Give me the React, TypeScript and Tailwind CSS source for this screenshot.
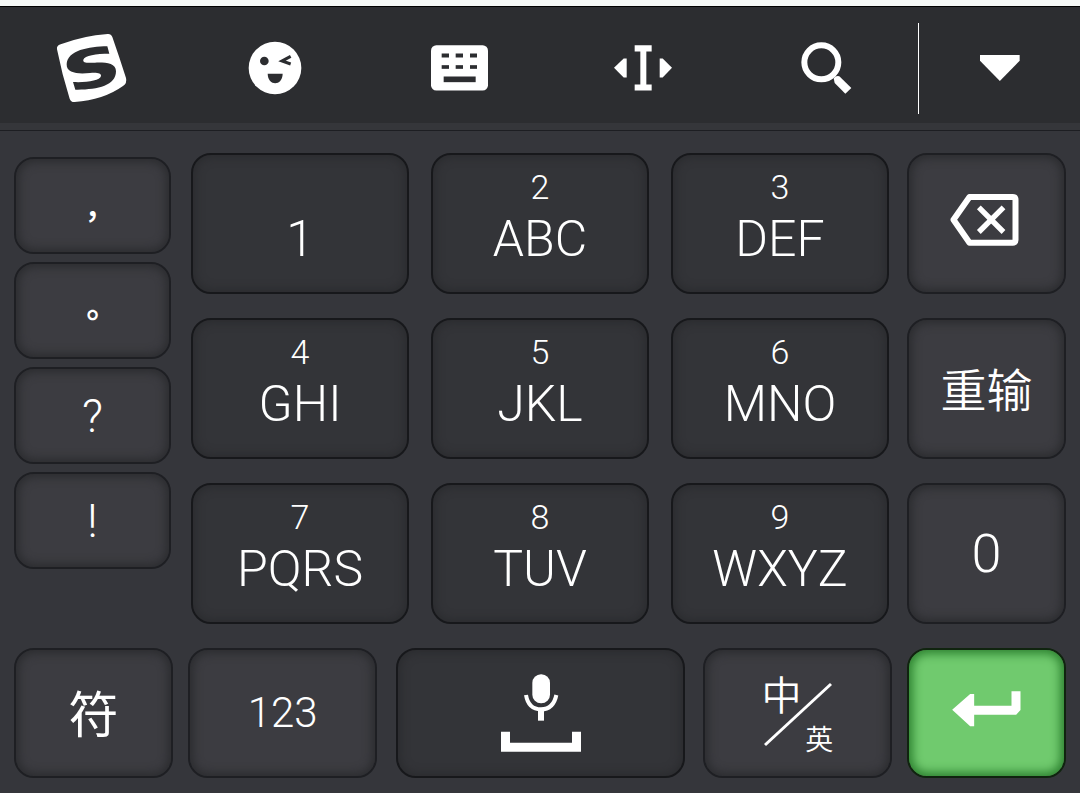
import type { ReactNode } from "react";

const INK = "#2c2d30";

function LogoIcon() {
  return (
    <svg viewBox="48 100 216 210" className="h-[70px] w-[72px]" aria-hidden="true">
      <path
        fill="#fff"
        d="M62 134 Q130 108 203 103 Q213 102 217 112 Q238 172 258 235 Q262 250 249 259 Q190 301 104 307 Q93 308 89 297 Q66 225 51 149 Q49 138 62 134Z"
      />
      <path
        fill={INK}
        d="M202 140 C146 141 82 152 80 194 C79 222 116 223 150 220 C172 218 184 221 183 229 C180 243 140 249 99 247 L106 270 C170 271 228 259 228 215 C228 190 196 188 165 189 C140 190 128 190 130 180 C134 167 168 162 208 162Z"
      />
    </svg>
  );
}

function SmileyIcon() {
  return (
    <svg viewBox="622 124 162 162" className="h-[54px] w-[54px]" aria-hidden="true">
      <circle cx="703" cy="205" r="79" fill="#fff" />
      <circle cx="671" cy="184" r="13" fill={INK} />
      <path d="M750 170 L724 184 L750 193" fill="none" stroke={INK} strokeWidth="9" />
      <path d="M681 222 H726 C725 260 682 260 681 222Z" fill={INK} />
    </svg>
  );
}

function KeyboardIcon() {
  return (
    <svg viewBox="60 77 171 137" className="h-[46px] w-[57px]" aria-hidden="true">
      <rect x="60" y="77" width="171" height="136" rx="16" fill="#fff" />
      <g fill={INK}>
        <rect x="92" y="102" width="22" height="12" />
        <rect x="134" y="102" width="22" height="12" />
        <rect x="177" y="102" width="21" height="12" />
        <rect x="92" y="137" width="22" height="11" />
        <rect x="134" y="137" width="22" height="11" />
        <rect x="177" y="137" width="21" height="11" />
        <rect x="98" y="171" width="96" height="17" />
      </g>
    </svg>
  );
}

function CursorIcon() {
  return (
    <svg viewBox="610 77 174 137" className="h-[46px] w-[58px]" aria-hidden="true">
      <g fill="#fff">
        <path d="M672 77 H723 V96 H707 V195 H723 V213 H672 V195 H689 V96 H672Z" />
        <path d="M610 145 L639 117 H648 V174 H639Z" />
        <path d="M784 145 L756 117 H747 V174 H756Z" />
      </g>
    </svg>
  );
}

function SearchIcon() {
  return (
    <svg viewBox="65 127 153 156" className="h-[52px] w-[51px]" aria-hidden="true">
      <circle cx="126" cy="188" r="51" fill="none" stroke="#fff" strokeWidth="18" />
      <path d="M163 236 Q170 227 180 230 L216 265 L198 282 L166 250Z" fill="#fff" />
    </svg>
  );
}

function CollapseIcon() {
  return (
    <svg viewBox="602 171 119 77" className="h-[26px] w-[40px]" aria-hidden="true">
      <path d="M602 171 H720 V188 L661 248 L602 188Z" fill="#fff" />
    </svg>
  );
}

function BackspaceIcon() {
  return (
    <svg viewBox="210 164 206 156" className="h-[52px] w-[69px]" aria-hidden="true">
      <path
        d="M268 173 H398 Q406 173 406 181 V302 Q406 310 398 310 H268 L220 241Z"
        fill="none"
        stroke="#fff"
        strokeWidth="18"
        strokeLinejoin="round"
      />
      <path d="M296 204 L370 278 M370 204 L296 278" stroke="#fff" strokeWidth="16" />
    </svg>
  );
}

function EnterIcon() {
  return (
    <svg viewBox="216 184 206 108" className="h-[36px] w-[69px]" aria-hidden="true">
      <path
        d="M216 240 L270 193 H282 V228 H394 V185 H421 V241 L408 255 H282 V290 H270Z"
        fill="#fff"
      />
    </svg>
  );
}

function SpaceMicIcon() {
  return (
    <svg viewBox="360 130 240 234" className="h-[78px] w-[80px]" aria-hidden="true">
      <rect x="454" y="131" width="53" height="87" rx="26" fill="#fff" />
      <path d="M435 193 C440 223 457 236 480 236 S520 223 526 193" fill="none" stroke="#fff" strokeWidth="12" />
      <rect x="471" y="236" width="18" height="34" fill="#fff" />
      <path d="M360 303 H387 V336 H573 V303 H600 V363 H360Z" fill="#fff" />
    </svg>
  );
}

const keyBase = "flex flex-col items-center rounded-[20px] border-2 text-white";

const keyTones = {
  dark: "border-[#17181b] bg-[#333438] shadow-[inset_0_0_10px_2px_#2a2b2e]",
  light: "border-[#1e1f23] bg-[#3c3c41] shadow-[inset_0_0_10px_3px_#2b2c2f]",
  green: "border-[#10240f] bg-[#70ca6e] shadow-[inset_0_0_10px_4px_#2f8432]",
};

function Key({
  tone = "light",
  label,
  className,
  children,
}: {
  tone?: keyof typeof keyTones;
  label: string;
  className: string;
  children: ReactNode;
}) {
  return (
    <button type="button" aria-label={label} className={`${keyBase} ${keyTones[tone]} ${className}`}>
      {children}
    </button>
  );
}

const tools = [
  { label: "Menu", icon: <LogoIcon /> },
  { label: "Emoji", icon: <SmileyIcon /> },
  { label: "Keyboard layout", icon: <KeyboardIcon /> },
  { label: "Move cursor", icon: <CursorIcon /> },
  { label: "Search", icon: <SearchIcon /> },
];

const letterKeys = [
  ["", "1"],
  ["2", "ABC"],
  ["3", "DEF"],
  ["4", "GHI"],
  ["5", "JKL"],
  ["6", "MNO"],
  ["7", "PQRS"],
  ["8", "TUV"],
  ["9", "WXYZ"],
];

const cjk = "font-['Noto_Sans_CJK_SC',sans-serif]";

export default function App() {
  return (
    <main className="flex min-h-screen flex-col border-t-[6px] border-[#f5f8f6] bg-[#35363b] font-['Roboto',sans-serif] font-[350] text-white">
      <header className="flex h-[117px] items-center border-t border-black bg-[#2c2d30] pt-[6px]">
        <nav className="grid flex-[919] grid-cols-5 items-center">
          {tools.map((tool) => (
            <button key={tool.label} type="button" aria-label={tool.label} className="flex h-[90px] items-center justify-center">
              {tool.icon}
            </button>
          ))}
        </nav>
        <div className="flex h-[91px] flex-[161] border-l border-white">
          <button type="button" aria-label="Hide keyboard" className="flex w-full items-center justify-center">
            <CollapseIcon />
          </button>
        </div>
      </header>
      <div className="h-2 border-b border-[#1d1e22] bg-[#35363a]" />

      <section className="flex flex-col gap-6 px-[14px] pt-[22px] pb-[14px]">
        <div className="flex">
          <div className="mr-5 flex flex-[157] flex-col gap-2 pt-1">
            <Key label="，" className="h-[97px] justify-center pt-4">
              <span lang="zh-TW" className="font-['Noto_Sans_CJK_TC',sans-serif] text-[32px] leading-[48px] font-medium">，</span>
            </Key>
            <Key label="。" className="h-[97px] justify-center pt-1">
              <span lang="zh-TW" className="font-['Noto_Sans_CJK_TC',sans-serif] text-[32px] leading-[48px] font-bold">。</span>
            </Key>
            <Key label="？" className="h-[97px] justify-center">
              <span className="text-[46px] leading-[48px]">?</span>
            </Key>
            <Key label="！" className="h-[97px] justify-center">
              <span className="text-[46px] leading-[48px]">!</span>
            </Key>
          </div>
          <div className="mr-[18px] grid flex-[698] grid-cols-3 gap-x-[22px] gap-y-6">
            {letterKeys.map(([digit, letters]) => (
              <Key key={letters} tone="dark" label={`${digit} ${letters}`} className="h-[141px] gap-2 pt-[14px]">
                <span className="h-9 text-[34px] leading-[36px]">{digit}</span>
                <span className="text-[50px] leading-[52px]">{letters}</span>
              </Key>
            ))}
          </div>
          <div className="flex flex-[159] flex-col gap-6">
            <Key label="Backspace" className="h-[141px] justify-center pr-1 pb-2">
              <BackspaceIcon />
            </Key>
            <Key label="重输" className="h-[141px] justify-center pb-1">
              <span className={`${cjk} text-[46px] leading-[48px]`}>重输</span>
            </Key>
            <Key label="0" className="h-[141px] justify-center">
              <span className="text-[54px] leading-[56px]">0</span>
            </Key>
          </div>
        </div>

        <div className="flex">
          <Key label="符" className="h-[130px] flex-[158] justify-center pb-1">
            <span className={`${cjk} text-[50px] leading-[52px] font-normal`}>符</span>
          </Key>
          <Key label="123" className="ml-[15px] h-[130px] flex-[189] justify-center">
            <span className="text-[42px] leading-[48px]">123</span>
          </Key>
          <Key tone="dark" label="Space" className="ml-[19px] h-[130px] flex-[290] justify-center">
            <SpaceMicIcon />
          </Key>
          <Key label="中英" className="ml-[18px] h-[130px] flex-[189] justify-center">
            <span className={`${cjk} relative ml-1 block h-[84px] w-[76px]`}>
              <span className="absolute top-0 left-0 text-[40px] leading-[44px]">中</span>
              <svg viewBox="0 0 76 84" className="absolute inset-0 h-full w-full" aria-hidden="true">
                <path d="M4 74 L70 13" stroke="#fff" strokeWidth="3" />
              </svg>
              <span className="absolute right-1 bottom-0 text-[28px] leading-[34px]">英</span>
            </span>
          </Key>
          <Key tone="green" label="Enter" className="ml-[15px] h-[130px] flex-[158] justify-center pb-2">
            <EnterIcon />
          </Key>
        </div>
      </section>
    </main>
  );
}
